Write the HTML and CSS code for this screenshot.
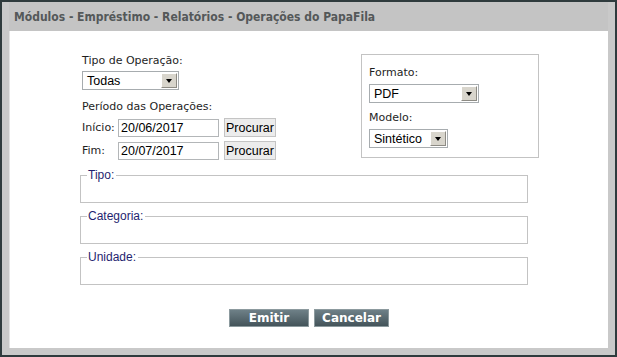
FILE: index.html
```html
<!DOCTYPE html>
<html lang="pt-BR">

<head>
    <meta charset="UTF-8">
    <meta name="viewport" content="width=device-width, initial-scale=1.0">
    <title>Operações do PapaFila</title>
    <link rel="stylesheet" href="styles.css">
</head>

<body>
    <div class="window">
        <div class="title-bar">Módulos - Empréstimo - Relatórios - Operações do PapaFila</div>

        <div class="content">
            <div class="top-row">
                <div class="left-col">
                    <div class="label">Tipo de Operação:</div>
                    <div class="select select-tipo">
                        <span class="select-value">Todas</span>
                        <span class="select-arrow"></span>
                    </div>

                    <div class="label periodo">Período das Operações:</div>
                    <div class="date-row">
                        <span class="label date-label">Início:</span>
                        <input class="date-input" type="text" value="20/06/2017">
                        <button class="btn-procurar">Procurar</button>
                    </div>
                    <div class="date-row">
                        <span class="label date-label">Fim:</span>
                        <input class="date-input" type="text" value="20/07/2017">
                        <button class="btn-procurar">Procurar</button>
                    </div>
                </div>

                <div class="right-box">
                    <div class="label">Formato:</div>
                    <div class="select select-formato">
                        <span class="select-value">PDF</span>
                        <span class="select-arrow"></span>
                    </div>
                    <div class="label modelo">Modelo:</div>
                    <div class="select select-modelo">
                        <span class="select-value">Sintético</span>
                        <span class="select-arrow"></span>
                    </div>
                </div>
            </div>

            <div class="groups">
                <fieldset>
                    <legend>Tipo:</legend>
                    <div class="group-body"></div>
                </fieldset>
                <fieldset>
                    <legend>Categoria:</legend>
                    <div class="group-body"></div>
                </fieldset>
                <fieldset>
                    <legend>Unidade:</legend>
                    <div class="group-body"></div>
                </fieldset>
            </div>

            <div class="actions">
                <button class="btn-action btn-emitir">Emitir</button>
                <button class="btn-action btn-cancelar">Cancelar</button>
            </div>
        </div>
    </div>
</body>

</html>
```

FILE: styles.css
```css
body {
    margin: 0;
    background-color: #ffffff;
}

.window {
    width: 617px;
    height: 357px;
    box-sizing: border-box;
    border: 2px solid #2f3b3d;
    background-color: #c9c9c9;
    padding: 0 7px 7px 7px;
    display: flex;
    flex-direction: column;
}

.title-bar {
    height: 29px;
    line-height: 30px;
    padding-left: 5px;
    background-color: #c4c4c4;
    color: #545859;
    font-family: "DejaVu Sans Condensed", "DejaVu Sans", sans-serif;
    font-stretch: condensed;
    font-size: 12px;
    font-weight: bold;
}

.content {
    flex: 1;
    background-color: #ffffff;
    border-left: 1px solid #e4e4e4;
    display: flex;
    flex-direction: column;
}

.top-row {
    display: flex;
    justify-content: space-between;
    padding: 23px 69px 0 72px;
}

.label {
    font-family: "DejaVu Sans", sans-serif;
    font-size: 11px;
    line-height: 14px;
    color: #1e1e1e;
}

.select {
    display: flex;
    align-items: center;
    box-sizing: border-box;
    height: 19px;
    margin-top: 3px;
    border: 1px solid #a7acaf;
    background-color: #ffffff;
    padding: 1px;
}

.select-value {
    flex: 1;
    padding-left: 3px;
    font-family: "Liberation Sans", sans-serif;
    font-size: 12.5px;
    color: #000000;
}

.select-arrow {
    position: relative;
    width: 16px;
    height: 15px;
    box-sizing: border-box;
    background-color: #d8d5cc;
    border: 1px solid;
    border-color: #ffffff #8d8b84 #8d8b84 #ffffff;
}

.select-arrow::after {
    content: "";
    position: absolute;
    left: 4px;
    top: 5px;
    border-left: 3.5px solid transparent;
    border-right: 3.5px solid transparent;
    border-top: 4px solid #000000;
}

.select-tipo {
    width: 97px;
}

.periodo {
    margin-top: 10px;
}

.date-row {
    display: flex;
    align-items: center;
    margin-top: 4px;
}

.date-label {
    width: 36px;
}

.date-input {
    box-sizing: border-box;
    width: 101px;
    height: 18px;
    margin: 0;
    padding: 0 2px;
    border: 1px solid #b3b6b8;
    font-family: "Liberation Sans", sans-serif;
    font-size: 12.5px;
    color: #000000;
}

.btn-procurar {
    box-sizing: border-box;
    height: 19px;
    margin: 0 0 0 5px;
    padding: 0 1px;
    border: 1px solid #c4c4c4;
    background-color: #ececec;
    font-family: "Liberation Sans", sans-serif;
    font-size: 12.5px;
    color: #000000;
}

.right-box {
    width: 178px;
    height: 104px;
    box-sizing: border-box;
    border: 1px solid #c3c3c3;
    padding: 11px 0 0 7px;
}

.select-formato {
    width: 110px;
    margin-top: 4px;
}

.modelo {
    margin-top: 8px;
}

.select-modelo {
    width: 79px;
    margin-top: 4px;
}

.groups {
    display: flex;
    flex-direction: column;
    gap: 6px;
    margin: 8px 80px 0 70px;
}

fieldset {
    margin: 0;
    padding: 0;
    border: 1px solid #c3c3c3;
}

legend {
    margin-left: 6px;
    padding: 0 2px 0 1px;
    font-family: "Liberation Sans", sans-serif;
    font-size: 12px;
    line-height: 14px;
    color: #1f1f70;
}

.group-body {
    height: 20px;
}

.actions {
    display: flex;
    justify-content: center;
    gap: 5px;
    margin-top: 24px;
}

.btn-action {
    box-sizing: border-box;
    height: 18px;
    margin: 0;
    padding: 0;
    border: 1px solid #8c9a9e;
    background: linear-gradient(#6e8087, #44545a);
    color: #ffffff;
    font-family: "DejaVu Sans", sans-serif;
    font-size: 12px;
    font-weight: bold;
    line-height: 16px;
}

.btn-emitir {
    width: 80px;
}

.btn-cancelar {
    width: 75px;
}
```
